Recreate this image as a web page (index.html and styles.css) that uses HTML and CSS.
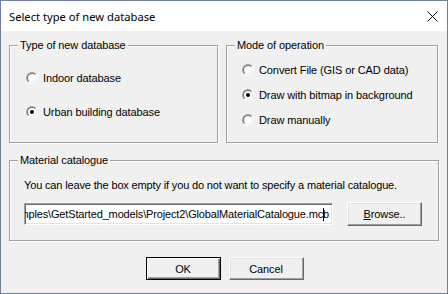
FILE: index.html
```html
<!DOCTYPE html>
<html>
<head>
<meta charset="utf-8">
<link rel="stylesheet" href="styles.css">
</head>
<body>
<div class="window">
  <div class="titlebar">
    <span class="title">Select type of new database</span>
    <svg class="close" width="11" height="11" viewBox="0 0 11 11"><path d="M0.5 0.5 L10.5 10.5 M10.5 0.5 L0.5 10.5" stroke="#000" stroke-width="1" fill="none"/></svg>
  </div>
  <div class="content">
    <div class="row">
      <div class="group g1">
        <span class="legend">Type of new database</span>
        <div class="opts opts1">
          <label class="opt"><span class="radio"><span class="inner"></span></span>Indoor database</label>
          <label class="opt"><span class="radio"><span class="inner"><span class="dot"></span></span></span>Urban building database</label>
        </div>
      </div>
      <div class="group g2">
        <span class="legend">Mode of operation</span>
        <div class="opts opts2">
          <label class="opt"><span class="radio"><span class="inner"></span></span>Convert File (GIS or CAD data)</label>
          <label class="opt"><span class="radio"><span class="inner"><span class="dot"></span></span></span>Draw with bitmap in background</label>
          <label class="opt"><span class="radio"><span class="inner"></span></span>Draw manually</label>
        </div>
      </div>
    </div>
    <div class="group g3">
      <span class="legend">Material catalogue</span>
      <div class="hint">You can leave the box empty if you do not want to specify a material catalogue.</div>
      <div class="fileline">
        <div class="edit"><span class="edittext">C:\Program Files\WinProp\Examples\GetStarted_models\Project2\GlobalMaterialCatalogue.mc<span class="caret"></span>b</span></div>
        <div class="btn browse"><span><u>B</u>rowse..</span></div>
      </div>
    </div>
    <div class="buttons">
      <div class="btn default">OK</div>
      <div class="btn">Cancel</div>
    </div>
  </div>
</div>
</body>
</html>
```

FILE: styles.css
```css
* { box-sizing: border-box; }
html, body { margin: 0; padding: 0; background: #f0f0f0; }
.window {
  width: 448px;
  height: 294px;
  border: 1px solid #6f7f9c;
  display: flex;
  flex-direction: column;
  font-family: "Liberation Sans", Arial, sans-serif;
  font-size: 11px;
  letter-spacing: -0.1px;
  color: #000;
}
.titlebar {
  height: 30px;
  background: #fff;
  display: flex;
  align-items: center;
  justify-content: space-between;
  padding: 0 9px 0 8px;
}
.title {
  font-family: "Noto Sans", "Open Sans", sans-serif;
  font-size: 11.2px;
  letter-spacing: 0;
  color: #000;
}
.close { display: block; margin-top: 1px; }
.content {
  flex: 1;
  background: #f0f0f0;
  padding: 14px 8px 0 8px;
  display: flex;
  flex-direction: column;
}
.row { display: flex; gap: 8px; }
.group {
  position: relative;
  border: 1px solid #a0a0a0;
  box-shadow: inset 1px 1px #fff, 1px 1px #fff;
}
.g1 { width: 209px; height: 98px; }
.g2 { width: 212px; height: 98px; }
.g3 { height: 81px; margin-top: 17px; padding: 17px 0 0 14px; }
.legend {
  position: absolute;
  top: -8px;
  left: 8px;
  padding: 0 2px;
  background: #f0f0f0;
  line-height: 14px;
  white-space: nowrap;
}
.opts { display: flex; flex-direction: column; }
.opts1 { padding: 25px 0 0 16px; gap: 20px; }
.opts2 { padding: 17px 0 0 15px; gap: 11px; }
.opt {
  display: flex;
  align-items: center;
  height: 14px;
  line-height: 14px;
  gap: 5px;
  white-space: nowrap;
}
.radio {
  width: 12px;
  height: 12px;
  border-radius: 50%;
  border: 1px solid;
  border-color: #a0a0a0 #fff #fff #a0a0a0;
  flex: none;
  display: block;
}
.radio .inner {
  display: flex;
  align-items: center;
  justify-content: center;
  width: 10px;
  height: 10px;
  border-radius: 50%;
  border: 1px solid;
  border-color: #696969 #e3e3e3 #e3e3e3 #696969;
  background: #fff;
}
.radio .dot {
  width: 4px;
  height: 4px;
  border-radius: 50%;
  background: #000;
}
.hint { line-height: 14px; white-space: nowrap; letter-spacing: -0.15px; }
.fileline {
  display: flex;
  align-items: center;
  margin-top: 10px;
  gap: 14px;
}
.edit {
  width: 309px;
  height: 22px;
  background: #fff;
  border: 1px solid;
  border-color: #a0a0a0 #fff #fff #a0a0a0;
  box-shadow: inset 1px 1px #696969, inset -1px -1px #e3e3e3;
  overflow: hidden;
  display: flex;
  justify-content: flex-end;
  align-items: center;
  padding: 0 3px 0 2px;
}
.edittext { white-space: nowrap; line-height: 14px; letter-spacing: -0.15px; }
.caret {
  display: inline-block;
  width: 1px;
  height: 13px;
  background: #000;
  vertical-align: -3px;
  margin-right: -1px;
}
.btn {
  width: 75px;
  height: 23px;
  background: #f0f0f0;
  border: 1px solid;
  border-color: #fff #696969 #696969 #fff;
  box-shadow: inset -1px -1px #a0a0a0, inset 1px 1px #e3e3e3;
  display: flex;
  align-items: center;
  justify-content: center;
  line-height: 14px;
}
.browse { height: 24px; }
.buttons {
  display: flex;
  justify-content: center;
  gap: 8px;
  margin-top: 16px;
  padding-left: 1px;
}
.btn.default {
  border: 1px solid #000;
  box-shadow: inset 1px 1px #fff, inset -1px -1px #696969, inset -2px -2px #a0a0a0;
}
```
